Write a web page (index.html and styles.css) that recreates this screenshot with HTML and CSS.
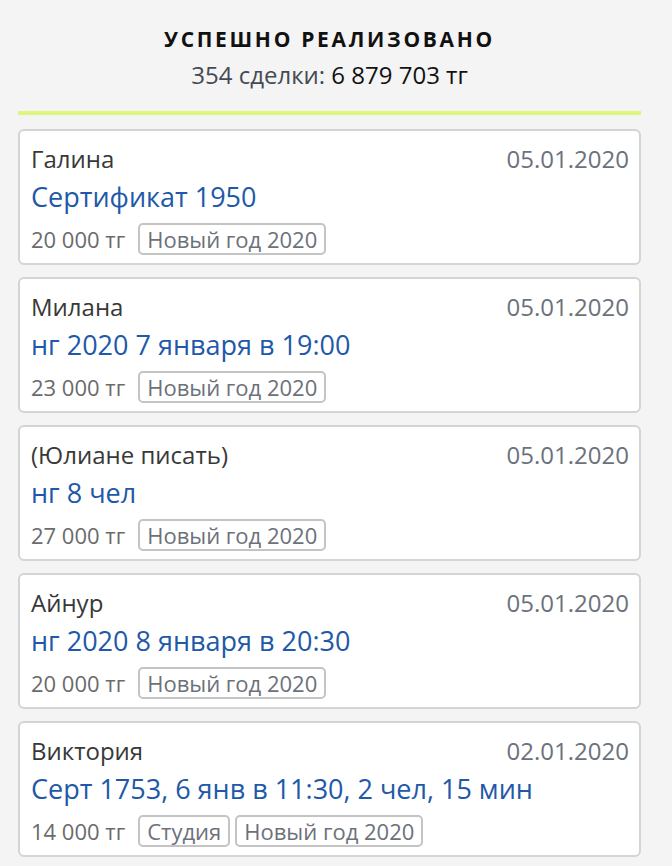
FILE: index.html
```html
<!DOCTYPE html>
<html lang="ru">
<head>
  <meta charset="UTF-8" />
  <meta name="viewport" content="width=device-width, initial-scale=1.0"/>
  <title>Успешно реализовано</title>
  <link rel="stylesheet" href="styles.css">
</head>
<body>

<div class="page">
  <header class="summary">
    <h1>Успешно реализовано</h1>
    <p><span class="label">354 сделки:</span> 6 879 703 тг</p>
  </header>

  <ul class="deals">
    <li class="deal">
      <div class="deal-top">
        <span class="client">Галина</span>
        <span class="date">05.01.2020</span>
      </div>
      <div class="deal-title">Сертификат 1950</div>
      <div class="deal-bottom">
        <span class="price">20 000 тг</span>
        <span class="tag">Новый год 2020</span>
      </div>
    </li>
    <li class="deal">
      <div class="deal-top">
        <span class="client">Милана</span>
        <span class="date">05.01.2020</span>
      </div>
      <div class="deal-title">нг 2020 7 января в 19:00</div>
      <div class="deal-bottom">
        <span class="price">23 000 тг</span>
        <span class="tag">Новый год 2020</span>
      </div>
    </li>
    <li class="deal">
      <div class="deal-top">
        <span class="client">(Юлиане писать)</span>
        <span class="date">05.01.2020</span>
      </div>
      <div class="deal-title">нг 8 чел</div>
      <div class="deal-bottom">
        <span class="price">27 000 тг</span>
        <span class="tag">Новый год 2020</span>
      </div>
    </li>
    <li class="deal">
      <div class="deal-top">
        <span class="client">Айнур</span>
        <span class="date">05.01.2020</span>
      </div>
      <div class="deal-title">нг 2020 8 января в 20:30</div>
      <div class="deal-bottom">
        <span class="price">20 000 тг</span>
        <span class="tag">Новый год 2020</span>
      </div>
    </li>
    <li class="deal">
      <div class="deal-top">
        <span class="client">Виктория</span>
        <span class="date">02.01.2020</span>
      </div>
      <div class="deal-title">Серт 1753, 6 янв в 11:30, 2 чел, 15 мин</div>
      <div class="deal-bottom">
        <span class="price">14 000 тг</span>
        <span class="tag">Студия</span>
        <span class="tag">Новый год 2020</span>
      </div>
    </li>
  </ul>
</div>

</body>
</html>
```
FILE: styles.css
```css
body {
  font-family: "Open Sans", "Noto Sans", sans-serif;
  margin: 0;
  padding: 0;
  background: #f4f4f4;
  color: #333;
}
.page {
  width: 623px;
  margin-left: 18px;
}
.summary {
  text-align: center;
  padding-top: 25px;
  padding-bottom: 19px;
  border-bottom: 4px solid #dcf77c;
  margin-bottom: 14px;
}
.summary h1 {
  margin: 0;
  font-size: 21px;
  line-height: 28px;
  font-weight: 700;
  letter-spacing: 2.7px;
  text-transform: uppercase;
  color: #111;
}
.summary p {
  margin: 5px 0 0;
  font-size: 24px;
  line-height: 34px;
  color: #111;
}
.summary .label {
  color: #454a53;
}
.deals {
  list-style: none;
  margin: 0;
  padding: 0;
}
.deal {
  background: #fff;
  border: 2px solid #d4d4d4;
  border-radius: 6px;
  padding: 13px 10px 8px 11px;
  margin-bottom: 12px;
}
.deal-top {
  display: flex;
  justify-content: space-between;
  font-size: 24px;
  line-height: 30px;
}
.client {
  color: #383838;
}
.date {
  color: #6c727b;
}
.deal-title {
  font-size: 27px;
  line-height: 45px;
  color: #2159a8;
  white-space: nowrap;
}
.deal-bottom {
  display: flex;
  align-items: center;
  gap: 5px;
  margin-top: 4px;
  font-size: 22px;
}
.price {
  color: #6b6b6b;
  margin-right: 8px;
}
.tag {
  border: 2px solid #c4c4c4;
  border-radius: 5px;
  padding: 0 7px;
  line-height: 28px;
  color: #6c717a;
}
```
